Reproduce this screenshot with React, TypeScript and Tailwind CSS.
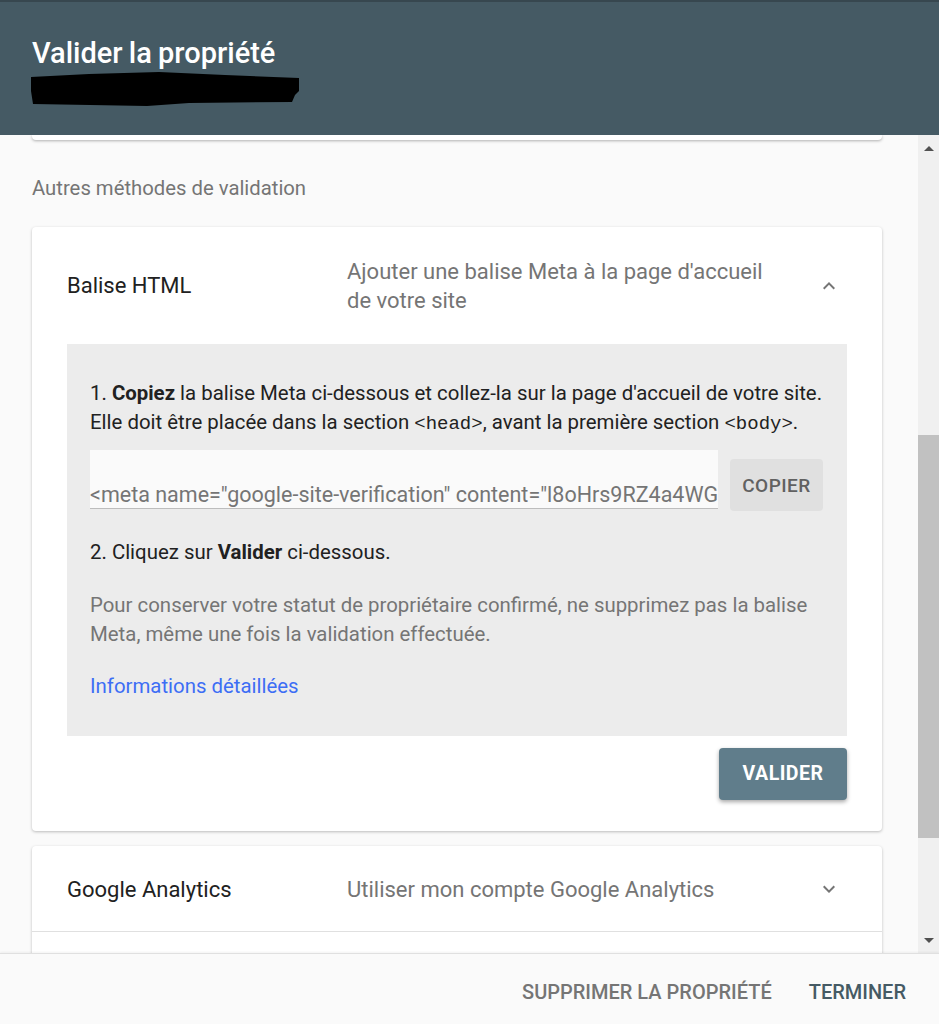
import React from 'react';

const font = { fontFamily: 'Roboto, "Noto Sans", Arial, sans-serif' };

function ChevronUp() {
  return (
    <svg width="24" height="24" viewBox="0 0 24 24" className="fill-[#757575]">
      <path d="M7.41 15.41L12 10.83l4.59 4.58L18 14l-6-6-6 6z" />
    </svg>
  );
}

function ChevronDown() {
  return (
    <svg width="24" height="24" viewBox="0 0 24 24" className="fill-[#757575]">
      <path d="M7.41 8.59L12 13.17l4.59-4.58L18 10l-6 6-6-6 1.41-1.41z" />
    </svg>
  );
}

// hand-drawn black marker over the site url
function Redaction() {
  return (
    <svg width="272" height="36" viewBox="0 0 272 36">
      <path d="M2 6 L60 3 L130 1 L196 4 L270 7 L270 20 L266 24 L263 31 L160 32 L118 35 L4 33 L2 20 Z" fill="#000" />
    </svg>
  );
}

export default function App() {
  return (
    <div className="w-[939px] h-[1024px] flex flex-col bg-[#fafafa] overflow-hidden" style={font}>
      {/* Header */}
      <header className="h-[135px] shrink-0 bg-[#455a64] border-t-2 border-[#37474f] px-8 pt-[34px] z-10 relative">
        <h1 className="text-[29px] font-medium text-white leading-[34px] [word-spacing:-1px]">Valider la propriété</h1>
        <div className="mt-[1px] -ml-[3px]">
          <Redaction />
        </div>
      </header>

      {/* Scrollable body */}
      <div className="flex-1 flex min-h-0">
        <div className="flex-1 overflow-hidden pl-8 pr-9">
          <div className="h-[5px] bg-white shadow-[0_1px_3px_rgba(0,0,0,0.3)] rounded-b-sm" />
          <p className="mt-[36px] text-[20.3px] text-[#757575] leading-6">Autres méthodes de validation</p>

          {/* Balise HTML card */}
          <div className="mt-[27px] bg-white rounded-sm shadow-[0_1px_3px_rgba(0,0,0,0.25)] px-[35px] pb-[31px]">
            <div className="h-[117px] flex items-center">
              <div className="w-[280px] text-[22px] text-[#212121]">Balise HTML</div>
              <div className="flex-1 text-[22px] text-[#757575] leading-[29px]">
                Ajouter une balise Meta à la page d'accueil
                <br />
                de votre site
              </div>
              <div className="w-[24px] mr-[6px]"><ChevronUp /></div>
            </div>

            <div className="bg-[#ececec] px-[23px] pt-[35px] pb-[35px] text-[20.4px] leading-[29px]">
              <p className="text-[#212121]">
                1. <b className="font-bold">Copiez</b> la balise Meta ci-dessous et collez-la sur la page d'accueil de votre site.
                <br />
                Elle doit être placée dans la section <code className="[font-family:'Liberation_Mono',monospace] text-[19px]">&lt;head&gt;</code>, avant la première section <code className="[font-family:'Liberation_Mono',monospace] text-[19px]">&lt;body&gt;</code>.
              </p>
              <div className="mt-[11px] flex items-start gap-3">
                <div className="w-[628px] h-[59px] bg-[#fafafa] border-b border-[#bdbdbd] overflow-hidden whitespace-nowrap flex items-end">
                  <span className="text-[21.5px] text-[#757575] leading-[26px]">&lt;meta name="google-site-verification" content="l8oHrs9RZ4a4WG</span>
                </div>
                <button className="mt-[9px] w-[93px] h-[52px] bg-[#e0e0e0] rounded-sm text-[19px] font-medium text-[#616161] tracking-wide">
                  COPIER
                </button>
              </div>
              <p className="mt-[27px] text-[#212121]">
                2. Cliquez sur <b className="font-bold">Valider</b> ci-dessous.
              </p>
              <p className="mt-[24px] text-[#757575]">
                Pour conserver votre statut de propriétaire confirmé, ne supprimez pas la balise
                <br />
                Meta, même une fois la validation effectuée.
              </p>
              <a className="block mt-[23px] text-[#3d6ef5]">Informations détaillées</a>
            </div>

            <div className="flex justify-end mt-[12px]">
              <button className="w-[128px] h-[52px] bg-[#607d8b] rounded-sm text-white text-[19.5px] font-bold tracking-wide shadow-[0_2px_4px_rgba(0,0,0,0.35)]">
                VALIDER
              </button>
            </div>
          </div>

          {/* Google Analytics card */}
          <div className="mt-[15px] bg-white rounded-t-sm shadow-[0_1px_3px_rgba(0,0,0,0.25)]">
            <div className="h-[86px] flex items-center px-[35px] pt-[1px] border-b border-[#e0e0e0]">
              <div className="w-[280px] text-[22px] text-[#212121]">Google Analytics</div>
              <div className="flex-1 text-[22px] text-[#757575]">Utiliser mon compte Google Analytics</div>
              <div className="w-[24px] mr-[6px]"><ChevronDown /></div>
            </div>
            <div className="h-[40px]" />
          </div>
        </div>

        {/* Scrollbar */}
        <div className="w-[21px] shrink-0 bg-[#f0f0f0] flex flex-col items-center">
          <div className="h-[26px] flex items-center justify-center">
            <div className="w-0 h-0 border-l-[5px] border-r-[5px] border-b-[5px] border-l-transparent border-r-transparent border-b-[#505050]" />
          </div>
          <div className="h-[274px]" />
          <div className="w-[21px] h-[403px] bg-[#c1c1c1]" />
          <div className="flex-1 flex items-end justify-center pb-[10px]">
            <div className="w-0 h-0 border-l-[5px] border-r-[5px] border-t-[5px] border-l-transparent border-r-transparent border-t-[#505050]" />
          </div>
        </div>
      </div>

      {/* Footer */}
      <footer className="h-[71px] shrink-0 bg-[#fafafa] border-t border-[#e0e0e0] flex items-center justify-end gap-[37px] pr-[33px] pt-[6px] relative z-10 shadow-[0_-1px_2px_rgba(0,0,0,0.05)]">
        <button className="text-[20px] font-medium text-[#757575]">SUPPRIMER LA PROPRIÉTÉ</button>
        <button className="text-[20px] font-medium text-[#455a64]">TERMINER</button>
      </footer>
    </div>
  );
}
